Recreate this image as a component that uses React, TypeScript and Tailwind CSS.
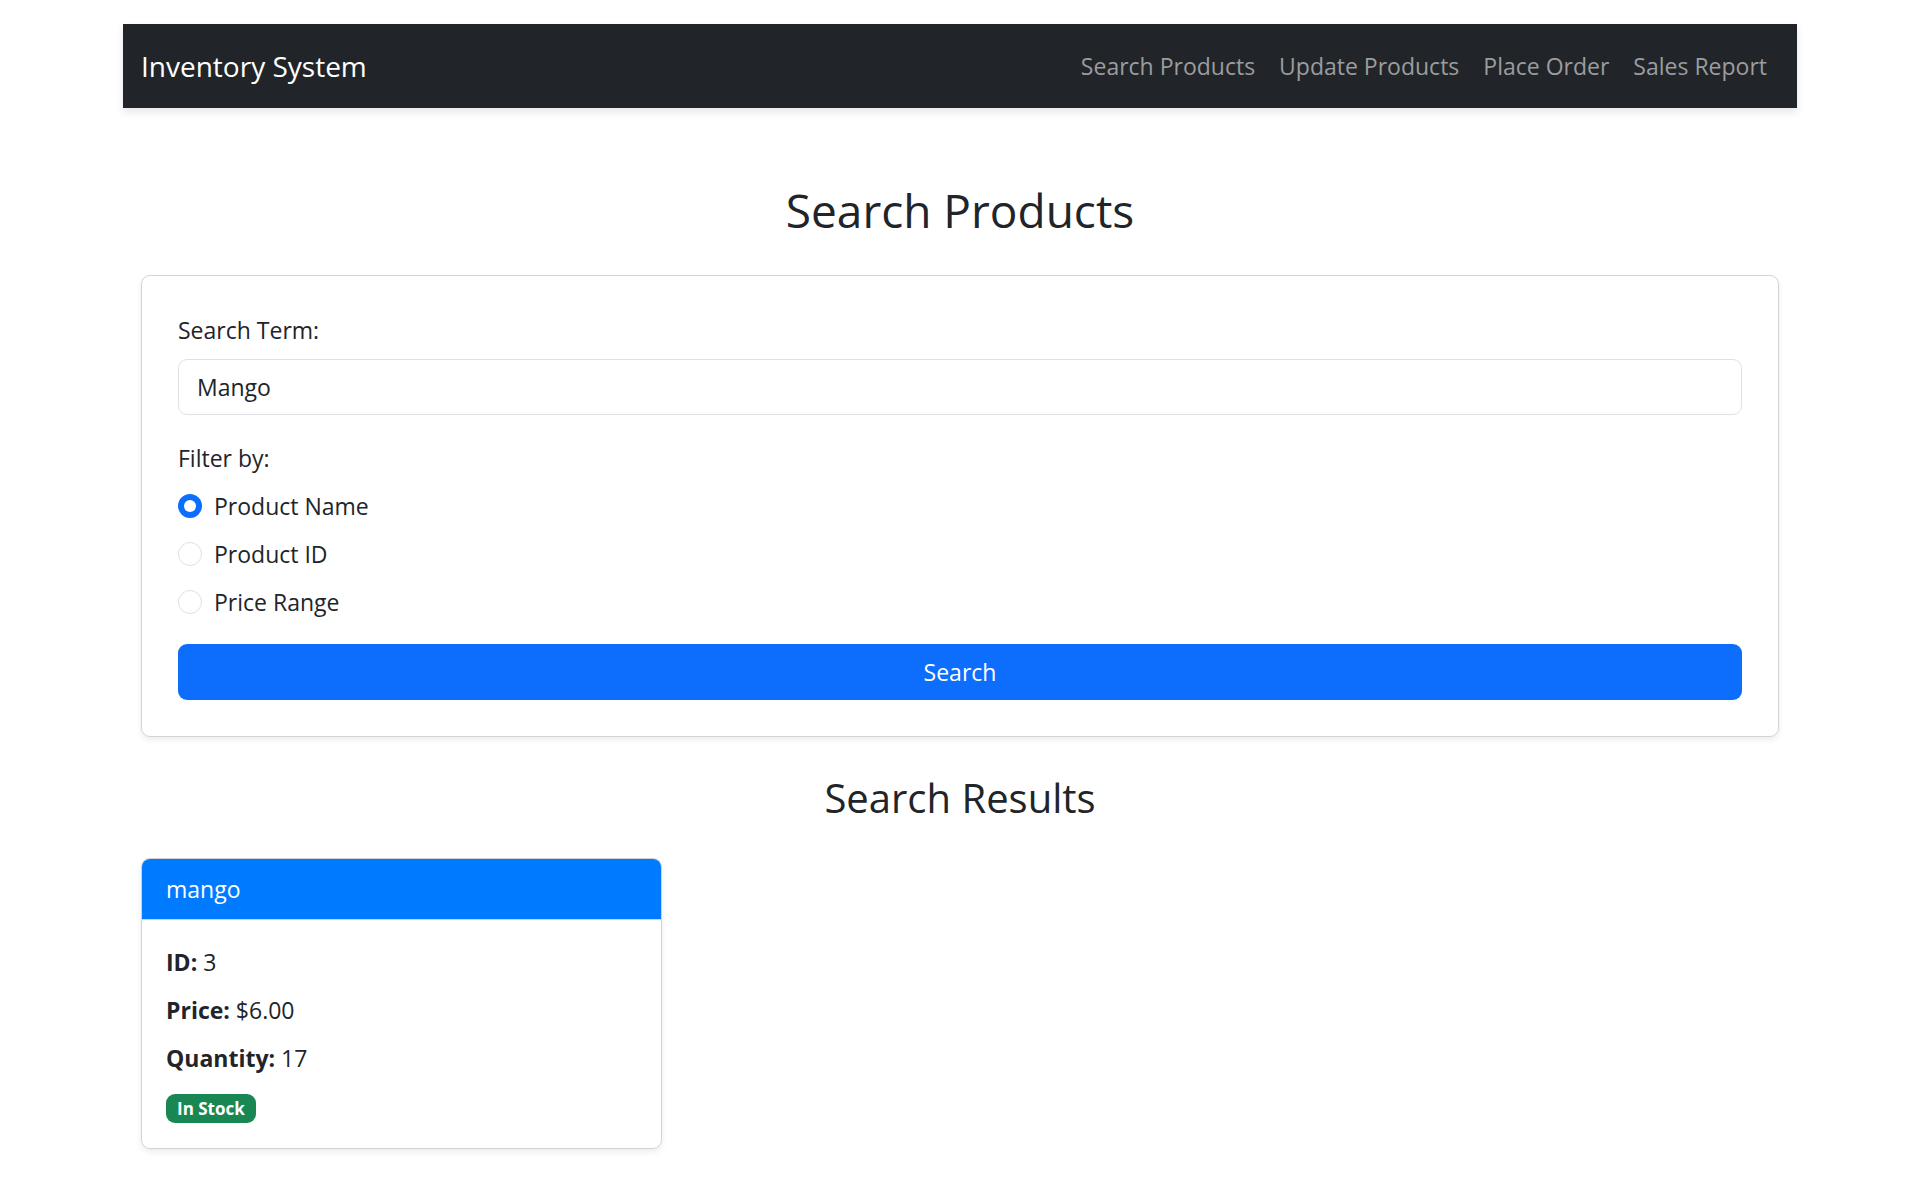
import { useState } from "react"

const navLinks = ["Search Products", "Update Products", "Place Order", "Sales Report"]
const filters = ["Product Name", "Product ID", "Price Range"]

function Radio({ checked }: { checked: boolean }) {
    return checked ? (
        <span className="mt-[6px] w-[24px] h-[24px] shrink-0 rounded-full bg-[#0d6efd] flex items-center justify-center">
            <span className="w-[12px] h-[12px] rounded-full bg-white" />
        </span>
    ) : (
        <span className="mt-[6px] w-[24px] h-[24px] shrink-0 rounded-full border-[1.5px] border-[#dee2e6] bg-white" />
    )
}

export default function App() {
    const [term, setTerm] = useState("Mango")
    const [filter, setFilter] = useState("Product Name")

    return (
        <div className="min-h-screen bg-white text-[#212529] font-['Open_Sans','Noto_Sans',sans-serif]">
            <div className="mx-auto w-[1710px] px-[18px] pt-[24px]">
                {/* Navbar */}
                <nav className="h-[84px] bg-[#212529] px-[18px] flex items-center justify-between shadow-[0_4px_8px_rgba(0,0,0,0.1)]">
                    <span className="text-[28px] leading-[45px] text-white">Inventory System</span>
                    <div className="flex items-center">
                        {navLinks.map((l) => (
                            <a key={l} className="px-[12px] text-[23px] leading-[36px] text-[#9b9c9f] cursor-pointer">
                                {l}
                            </a>
                        ))}
                    </div>
                </nav>

                <div className="px-[18px]">
                    <h2 className="mt-[73px] mb-[36px] text-center text-[46px] leading-[58px] font-medium">
                        Search Products
                    </h2>

                    {/* Search form */}
                    <div className="border border-[#d3d3d3] rounded-[9px] shadow-[0_3px_6px_rgba(0,0,0,0.075)] p-[36px]">
                        <label className="block text-[23px] leading-[36px] mb-[11px]">Search Term:</label>
                        <input
                            value={term}
                            onChange={(e) => setTerm(e.target.value)}
                            className="block w-full h-[56px] border border-[#dee2e6] rounded-[9px] px-[18px] text-[23px] outline-none mb-[25px]"
                        />
                        <label className="block text-[23px] leading-[36px] mb-[12px]">Filter by:</label>
                        <div className="flex flex-col gap-[12px] mb-[24px]">
                            {filters.map((f) => (
                                <div key={f} className="flex items-start gap-[12px] cursor-pointer" onClick={() => setFilter(f)}>
                                    <Radio checked={filter === f} />
                                    <span className="text-[23px] leading-[36px]">{f}</span>
                                </div>
                            ))}
                        </div>
                        <button className="w-full h-[56px] bg-[#0d6efd] rounded-[9px] text-white text-[23px]">
                            Search
                        </button>
                    </div>

                    <h3 className="mt-[36px] mb-[35px] text-center text-[40px] leading-[50px] font-medium">
                        Search Results
                    </h3>

                    {/* Result card */}
                    <div className="w-[521px] border border-[#d3d3d3] rounded-[9px] shadow-[0_3px_6px_rgba(0,0,0,0.075)] overflow-hidden">
                        <div className="bg-[#007bff] px-[24px] py-[12px] text-white text-[23px] leading-[36px] border-b border-[#d3d3d3]">
                            mango
                        </div>
                        <div className="p-[24px] text-[23px] leading-[36px]">
                            <p className="mb-[12px]"><strong className="font-bold">ID:</strong> 3</p>
                            <p className="mb-[12px]"><strong className="font-bold">Price:</strong> $6.00</p>
                            <p className="mb-[12px]"><strong className="font-bold">Quantity:</strong> 17</p>
                            <div className="h-[36px] flex items-center pt-[4px]">
                                <span className="inline-block bg-[#198754] text-white text-[17px] font-bold leading-none px-[11px] py-[6px] rounded-[9px]">
                                    In Stock
                                </span>
                            </div>
                        </div>
                    </div>
                </div>
            </div>
        </div>
    )
}
